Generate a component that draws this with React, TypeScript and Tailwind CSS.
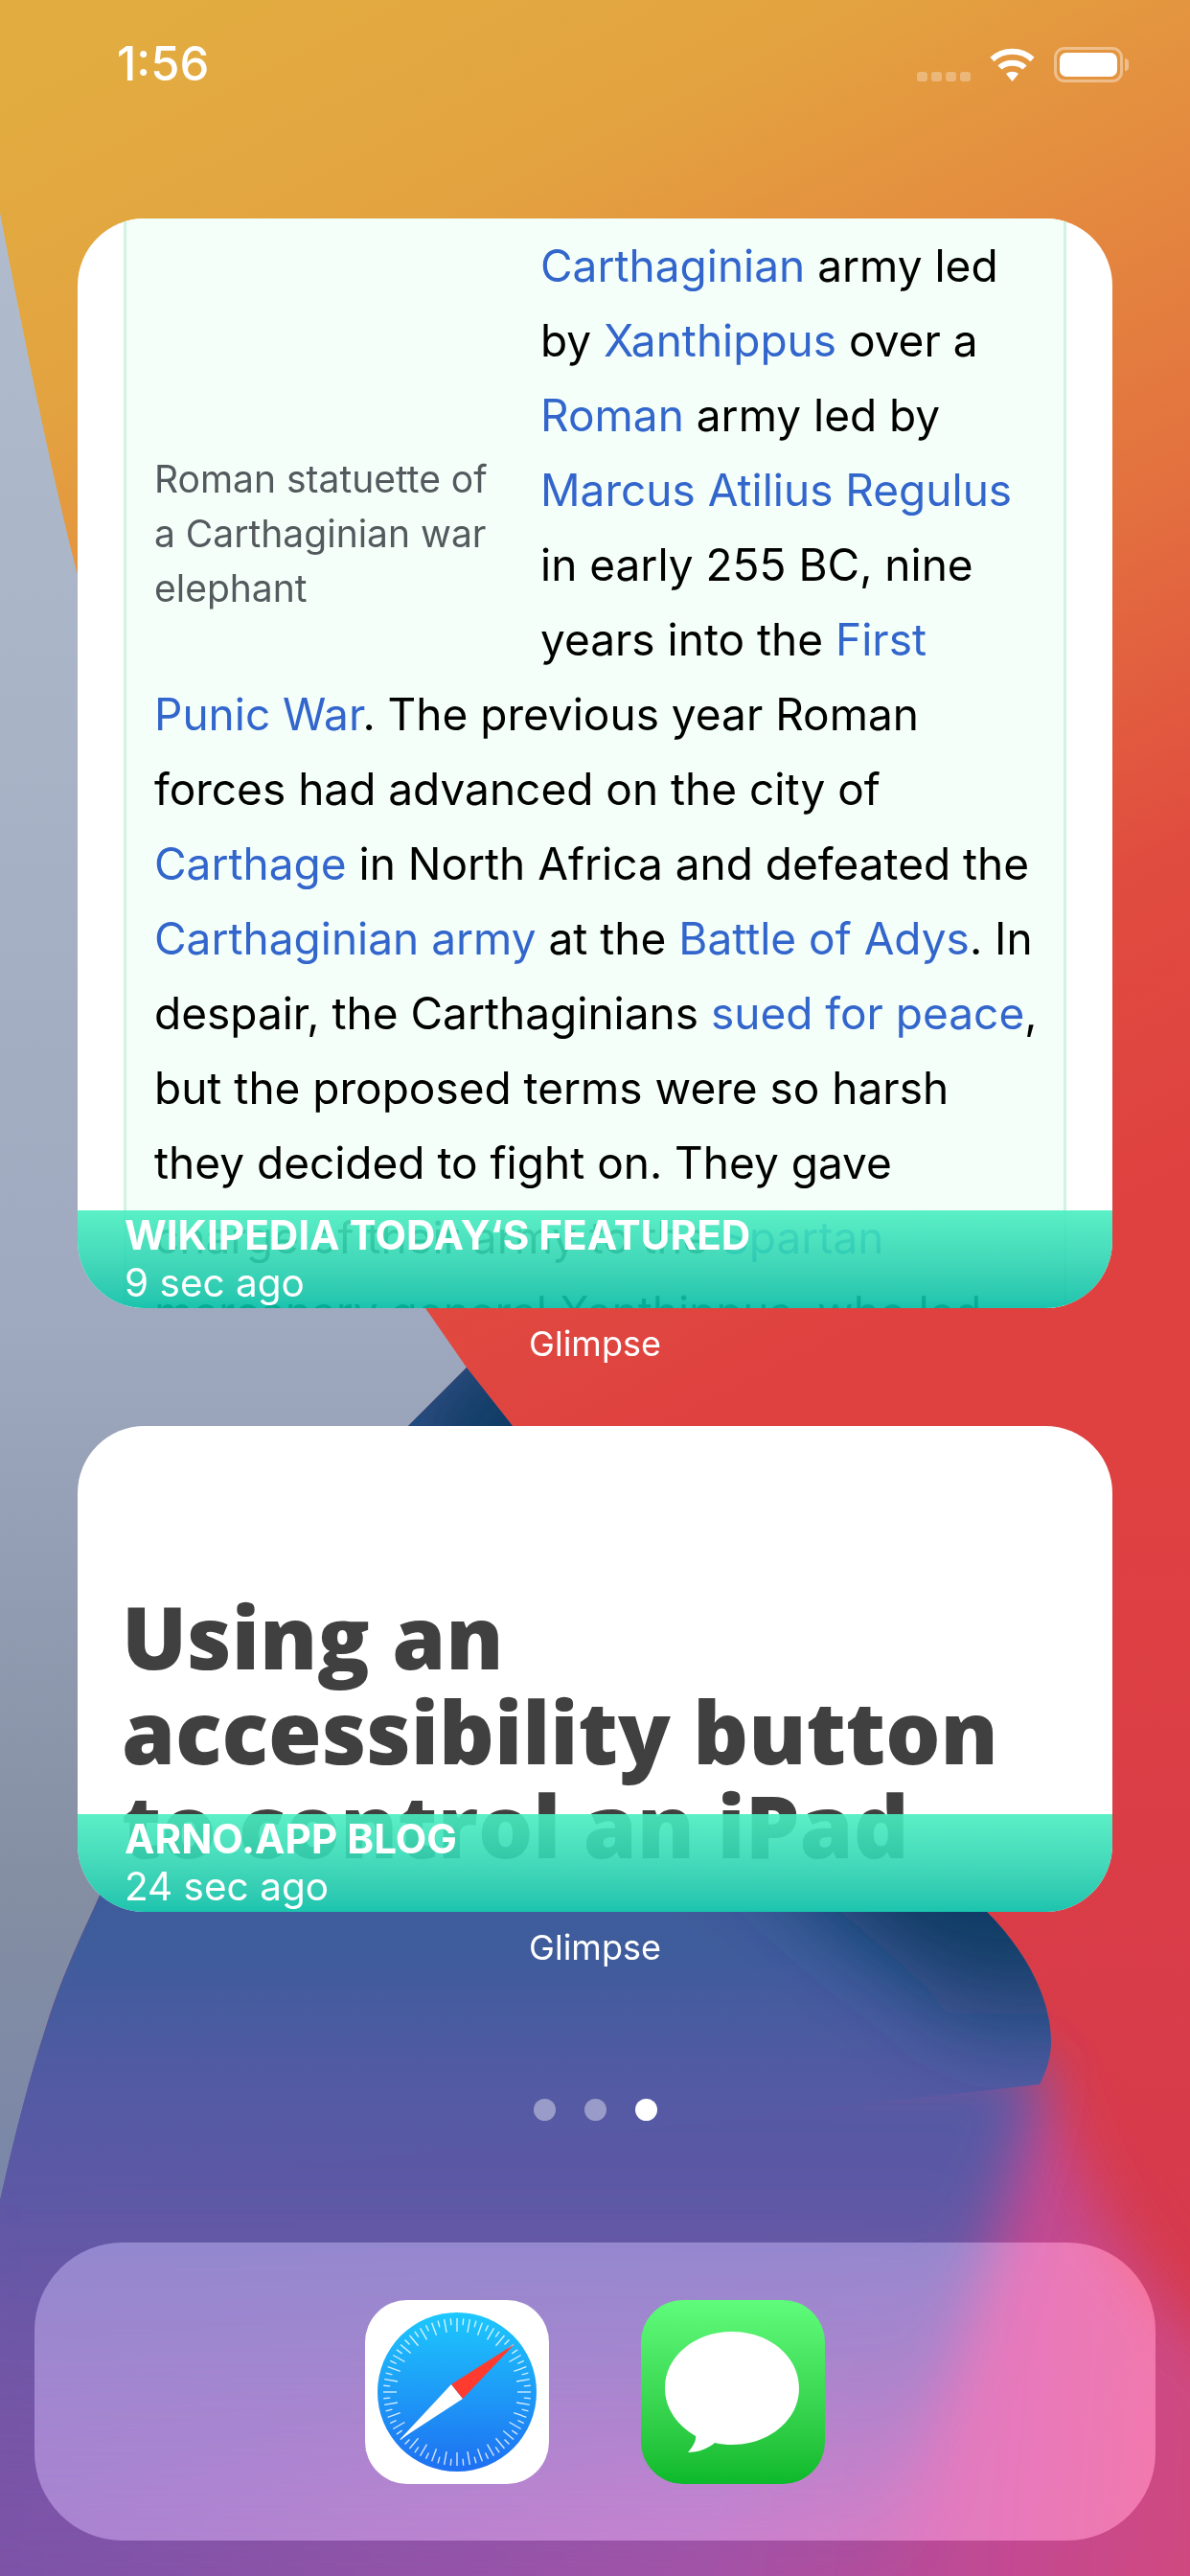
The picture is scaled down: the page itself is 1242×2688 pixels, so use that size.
function Wallpaper() {
  const blueEdge =
    "M487 1427 L535 1488 C700 1720 900 1880 1030 1995 C1075 2040 1097 2090 1097 2130 C1097 2150 1090 2165 1085 2175 L0 2296 C15 2230 30 2170 48 2115 C65 2060 85 2020 103 1980 C190 1780 300 1620 426 1488 Z";
  return (
    <svg className="absolute inset-0 w-full h-full" viewBox="0 0 1242 2688" preserveAspectRatio="none">
      <defs>
        <linearGradient id="top" gradientUnits="userSpaceOnUse" x1="200" y1="0" x2="900" y2="1400">
          <stop offset="0" stopColor="#e2ac40" />
          <stop offset="0.2" stopColor="#e3a340" />
          <stop offset="0.3" stopColor="#e4953f" />
          <stop offset="0.58" stopColor="#e3703f" />
          <stop offset="0.8" stopColor="#e04c3f" />
          <stop offset="1" stopColor="#df4140" />
        </linearGradient>
        <linearGradient id="redFade" gradientUnits="userSpaceOnUse" x1="0" y1="1500" x2="0" y2="2300">
          <stop offset="0" stopColor="#d63a4c" stopOpacity="0" />
          <stop offset="1" stopColor="#d63a4c" />
        </linearGradient>
        <linearGradient id="gray" x1="0" y1="0" x2="0" y2="1">
          <stop offset="0" stopColor="#b0bccd" />
          <stop offset="0.55" stopColor="#9fa9bf" />
          <stop offset="0.85" stopColor="#838ea3" />
          <stop offset="1" stopColor="#7a86a8" />
        </linearGradient>
        <linearGradient id="blue" gradientUnits="userSpaceOnUse" x1="0" y1="1430" x2="0" y2="2300">
          <stop offset="0" stopColor="#34568f" />
          <stop offset="0.7" stopColor="#3f5c9c" />
          <stop offset="0.86" stopColor="#535aa3" />
          <stop offset="1" stopColor="#5e58a5" />
        </linearGradient>
        <linearGradient id="fadeBlue" gradientUnits="userSpaceOnUse" x1="0" y1="2175" x2="0" y2="2688">
          <stop offset="0" stopColor="#535aa3" />
          <stop offset="0.25" stopColor="#5e58a5" />
          <stop offset="0.6" stopColor="#6f57a6" stopOpacity="0.75" />
          <stop offset="1" stopColor="#7a55a8" stopOpacity="0" />
        </linearGradient>
        <linearGradient id="pink" gradientUnits="userSpaceOnUse" x1="0" y1="2500" x2="1242" y2="2600">
          <stop offset="0" stopColor="#7a52a8" />
          <stop offset="0.6" stopColor="#a452a8" />
          <stop offset="0.85" stopColor="#c24a92" />
          <stop offset="1" stopColor="#d04880" />
        </linearGradient>
        <linearGradient id="edgeDark" gradientUnits="userSpaceOnUse" x1="0" y1="2020" x2="0" y2="2175">
          <stop offset="0" stopColor="#0e3a63" />
          <stop offset="1" stopColor="#0e3a63" stopOpacity="0" />
        </linearGradient>
        <clipPath id="blueClip">
          <path d={blueEdge} />
        </clipPath>
        <filter id="soft" x="-30%" y="-30%" width="160%" height="160%">
          <feGaussianBlur stdDeviation="45" />
        </filter>
        <filter id="softer" x="-30%" y="-30%" width="160%" height="160%">
          <feGaussianBlur stdDeviation="30" />
        </filter>
      </defs>
      <rect width="1242" height="2688" fill="url(#top)" />
      <rect y="1500" width="1242" height="1188" fill="url(#redFade)" />
      <path
        d="M1090 2160 C1130 2300 1200 2400 1300 2480 L1300 2760 L-60 2760 L-60 2160 Z"
        fill="url(#pink)"
        filter="url(#softer)"
      />
      <path
        d="M-60 2150 L1085 2150 C1060 2280 1000 2450 900 2760 L-60 2760 Z"
        fill="url(#fadeBlue)"
        filter="url(#softer)"
      />
      <path
        d="M0 222 C30 380 60 520 81 600 L444 1365 L487 1427 L426 1488 C300 1620 190 1780 103 1980 C85 2020 65 2060 48 2115 C30 2170 15 2230 0 2296 Z"
        fill="url(#gray)"
      />
      <path d={blueEdge} fill="url(#blue)" />
      <g clipPath="url(#blueClip)">
        <path
          d="M487 1427 L535 1488 C700 1720 900 1880 1030 1995 C1075 2040 1097 2090 1097 2130"
          fill="none"
          stroke="url(#edgeDark)"
          strokeWidth="200"
          filter="url(#soft)"
        />
      </g>
    </svg>
  );
}

function WifiIcon() {
  return (
    <svg width="47" height="36" viewBox="0 0 47 36" fill="none" stroke="#fff" strokeWidth="6">
      <path d="M2.5 13 C14 2 33 2 44.5 13" />
      <path d="M10.5 21.5 C17 15 30 15 36.5 21.5" />
      <path d="M17 28 L23.5 36 L30 28 C26 25 21 25 17 28 Z" fill="#fff" stroke="none" />
    </svg>
  );
}

function StatusBar() {
  return (
    <div className="h-[228px] flex justify-between items-start pl-[122px] pr-[64px] pt-[38px] text-white">
      <span className="text-[49px] font-medium leading-[58px]">1:56</span>
      <div className="flex items-start gap-[20px] pt-[11px]">
        <div className="flex gap-[4px] mt-[26px]">
          <span className="w-[11px] h-[10px] rounded-[3px] bg-white/30" />
          <span className="w-[11px] h-[10px] rounded-[3px] bg-white/30" />
          <span className="w-[11px] h-[10px] rounded-[3px] bg-white/30" />
          <span className="w-[11px] h-[10px] rounded-[3px] bg-white/30" />
        </div>
        <WifiIcon />
        <div className="flex items-center">
          <div className="w-[72px] h-[37px] rounded-[11px] border-[3px] border-white/40 p-[3px]">
            <div className="w-full h-full rounded-[7px] bg-white" />
          </div>
          <div className="w-[4px] h-[13px] ml-[2px] rounded-r-full bg-white/40" />
        </div>
      </div>
    </div>
  );
}

function Footer({ title, time }: { title: string; time: string }) {
  return (
    <div className="absolute left-0 right-0 bottom-0 h-[102px] pl-[49px] pt-[4px] text-white bg-gradient-to-b from-[#49eec0]/90 to-[#01bda5]/90">
      <div className="text-[42.2px] leading-[44px] font-bold">{title}</div>
      <div className="text-[40.5px] leading-[46px] mt-[5px]">{time}</div>
    </div>
  );
}

function WidgetLabel() {
  return <div className="text-center text-white text-[36px] leading-[40px] mt-[17px]">Glimpse</div>;
}

const link = "text-[#3366cc]";

function WikiWidget() {
  return (
    <div className="relative h-[1137px] rounded-[70px] bg-white overflow-hidden">
      <div className="mx-[48px] h-full border-x-[3px] border-[#d0f3e3] bg-[#f4fff9] pl-[29px] text-[46px] leading-[78px] text-black pt-[10px] whitespace-nowrap">
        <div className="float-left w-[403px] h-[460px] pt-[233px] text-[#54595d] text-[39px] leading-[57px]">
          Roman statuette of<br />
          a Carthaginian war<br />
          elephant
        </div>
        <p>
          <span className={link}>Carthaginian</span> army led<br />
          by <span className={link}>Xanthippus</span> over a<br />
          <span className={link}>Roman</span> army led by<br />
          <span className={link}>Marcus Atilius Regulus</span><br />
          in early 255 BC, nine<br />
          years into the <span className={link}>First</span><br />
          <span className={link}>Punic War</span>. The previous year Roman<br />
          forces had advanced on the city of<br />
          <span className={link}>Carthage</span> in North Africa and defeated the<br />
          <span className={link}>Carthaginian army</span> at the <span className={link}>Battle of Adys</span>. In<br />
          despair, the Carthaginians <span className={link}>sued for peace</span>,<br />
          but the proposed terms were so harsh<br />
          they decided to fight on. They gave<br />
          charge of their army to the <span className={link}>Spartan</span><br />
          mercenary general Xanthippus, who led
        </p>
      </div>
      <Footer title="WIKIPEDIA TODAY‘S FEATURED" time="9 sec ago" />
    </div>
  );
}

function BlogWidget() {
  return (
    <div className="relative h-[507px] rounded-[70px] bg-white overflow-hidden mt-[66px]">
      <div className="pl-[46px] pt-[170px] font-['Open_Sans'] font-extrabold text-[#404040] text-[90px] leading-[98.5px] whitespace-nowrap">
        Using an<br />
        accessibility button<br />
        to control an iPad
      </div>
      <Footer title="ARNO.APP BLOG" time="24 sec ago" />
    </div>
  );
}

function SafariIcon() {
  const ticks = Array.from({ length: 72 }, (_, i) => i);
  return (
    <div className="w-[192px] h-[192px] rounded-[44px] bg-white flex items-center justify-center">
      <svg width="166" height="166" viewBox="0 0 166 166">
        <defs>
          <linearGradient id="safari" x1="0" y1="0" x2="0" y2="1">
            <stop offset="0" stopColor="#1dc8fd" />
            <stop offset="1" stopColor="#1e6ff1" />
          </linearGradient>
        </defs>
        <circle cx="83" cy="83" r="83" fill="url(#safari)" />
        {ticks.map((i) => (
          <line
            key={i}
            x1="83"
            y1="6"
            x2="83"
            y2={i % 2 === 0 ? 20 : 13}
            stroke="#fff"
            strokeOpacity="0.8"
            strokeWidth="1.4"
            transform={`rotate(${i * 5} 83 83)`}
          />
        ))}
        <path d="M23 133 L77 75 L89 90 Z" fill="#fff" />
        <path d="M143 33 L77 75 L89 90 Z" fill="#ff3b30" />
      </svg>
    </div>
  );
}

function MessagesIcon() {
  return (
    <div className="w-[192px] h-[192px] rounded-[44px] bg-gradient-to-b from-[#5ffc7b] to-[#0bb92a]">
      <svg width="192" height="192" viewBox="0 0 192 192">
        <path
          d="M95 33 C134 33 165 59 165 92 C165 125 134 151 95 151 C89 151 83 150.5 77 149 C70 155 60 159 49 159 C54 153 58 147 57 142 C38 131 25 113 25 92 C25 59 56 33 95 33 Z"
          fill="#fff"
        />
      </svg>
    </div>
  );
}

function Dots() {
  return (
    <div className="flex justify-center gap-[30px] mt-[138px]">
      <span className="w-[23px] h-[23px] rounded-full bg-white/40" />
      <span className="w-[23px] h-[23px] rounded-full bg-white/40" />
      <span className="w-[23px] h-[23px] rounded-full bg-white" />
    </div>
  );
}

export default function App() {
  return (
    <div className="relative w-[1242px] h-[2688px] overflow-hidden font-['Inter',sans-serif]">
      <Wallpaper />
      <div className="relative">
        <StatusBar />
        <div className="px-[81px]">
          <WikiWidget />
          <WidgetLabel />
          <BlogWidget />
          <WidgetLabel />
        </div>
        <Dots />
        <div className="mx-[36px] mt-[127px] h-[311px] rounded-[92px] bg-white/30 backdrop-saturate-[1.3] flex justify-center items-center gap-[96px]">
          <SafariIcon />
          <MessagesIcon />
        </div>
      </div>
    </div>
  );
}
